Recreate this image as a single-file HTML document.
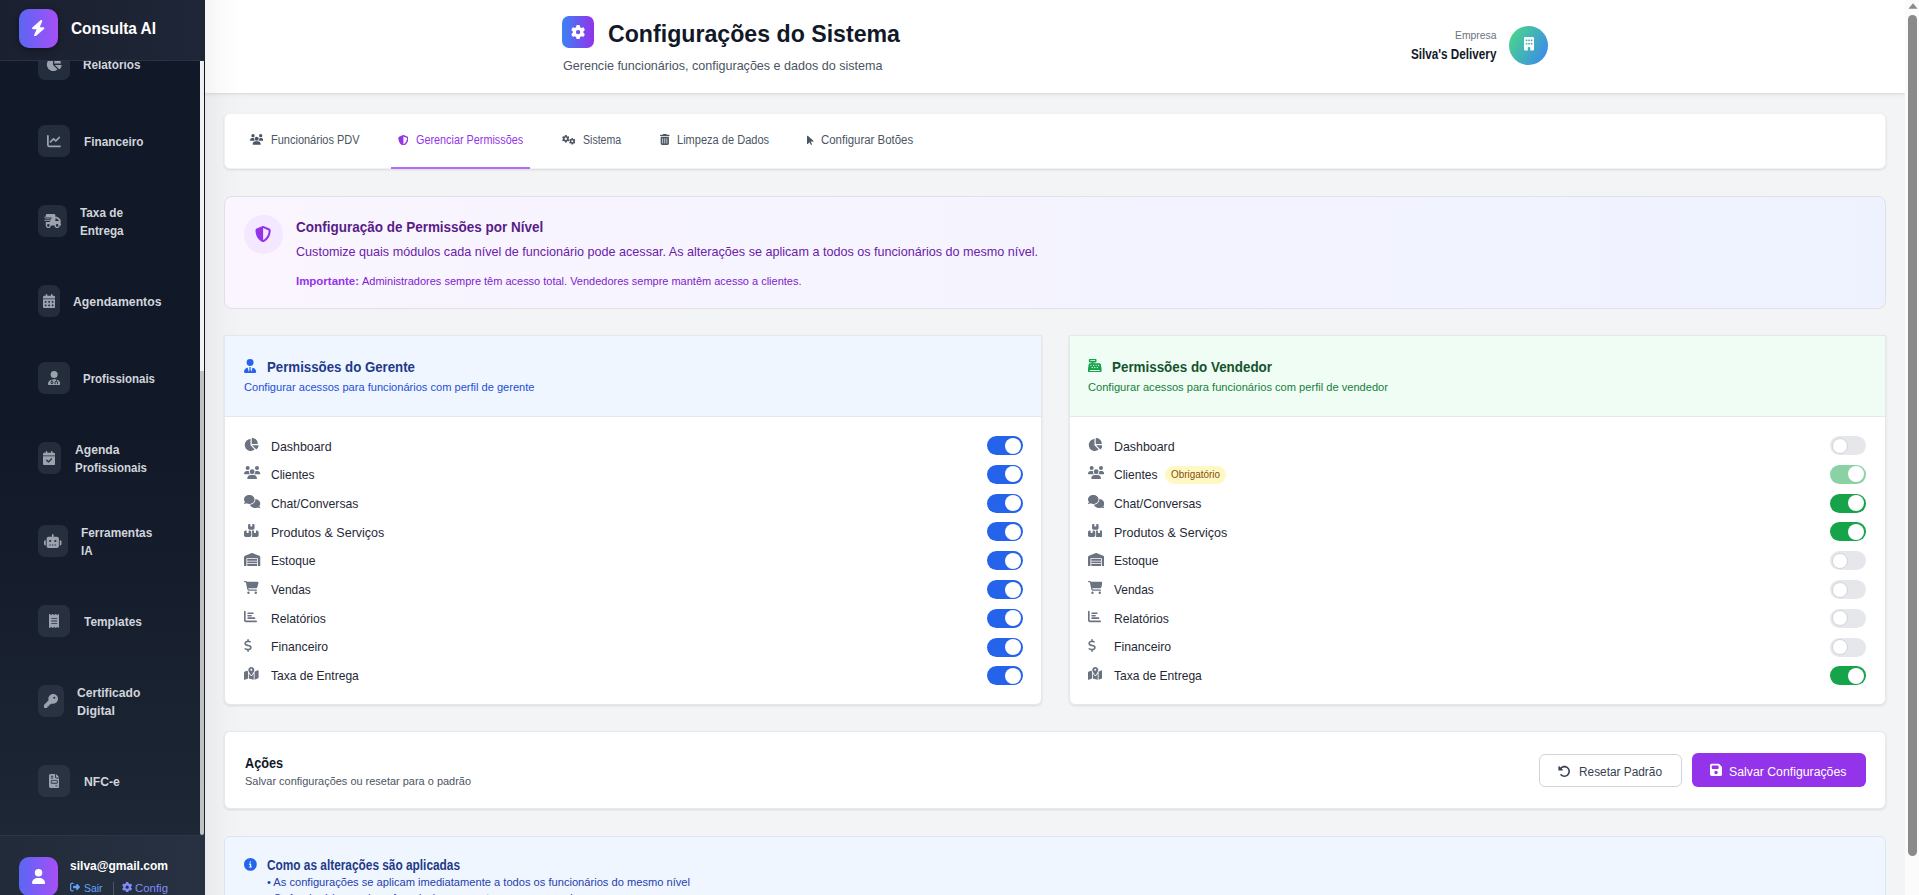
<!DOCTYPE html><html><head><meta charset="utf-8"><title>Configurações do Sistema</title><style>
html,body{margin:0;padding:0;width:1919px;height:895px;overflow:hidden;}body{position:relative;background:#f3f4f6;font-family:"Liberation Sans", sans-serif;}
div{box-sizing:border-box;}.t{position:absolute;white-space:nowrap;transform-origin:0 0;}
</style></head><body>
<div style="position:absolute;left:0px;top:0px;width:205px;height:895px;background:linear-gradient(to bottom,#111827 0%,#111827 48%,#1f2937 100%);"></div>
<div style="position:absolute;left:38px;top:48px;width:32px;height:32px;background:rgba(55,65,81,0.5);border-radius:7px;"></div>
<svg style="position:absolute;left:46.125px;top:57.0px;" width="15.75" height="14.00" viewBox="0 0 576 512"><path d="M304 240V16.6c0-9 7-16.6 16-16.6C443.7 0 544 100.3 544 224c0 9-7.6 16-16.6 16H304zM32 272C32 150.7 122.1 50.3 239 34.3c9.2-1.3 17 6.1 17 15.4V288L412.5 444.5c6.7 6.7 6.2 17.7-1.5 23.1C371.8 495.6 323.8 512 272 512C139.5 512 32 404.6 32 272zm526.4 16c9.3 0 16.6 7.8 15.4 17c-7.7 55.9-34.6 105.6-73.9 142.3c-6 5.6-15.4 5.2-21.2-.7L320 288H558.4z" fill="#9ca3af"/></svg>
<span class="t" id="t0" style="left:83.00px;top:58.12px;font-size:13.5px;line-height:13.5px;font-weight:700;color:#d1d5db;transform:scaleX(0.8723);">Relatórios</span>
<div style="position:absolute;left:38px;top:125px;width:32px;height:32px;background:rgba(55,65,81,0.5);border-radius:7px;"></div>
<svg style="position:absolute;left:47.0px;top:134.0px;" width="14.00" height="14.00" viewBox="0 0 512 512"><path d="M64 64c0-17.7-14.3-32-32-32S0 46.3 0 64V400c0 44.2 35.8 80 80 80H480c17.7 0 32-14.3 32-32s-14.3-32-32-32H80c-8.8 0-16-7.2-16-16V64zm406.6 86.6c12.5-12.5 12.5-32.8 0-45.3s-32.8-12.5-45.3 0L320 210.7l-57.4-57.4c-12.5-12.5-32.8-12.5-45.3 0l-112 112c-12.5 12.5-12.5 32.8 0 45.3s32.8 12.5 45.3 0L240 221.3l57.4 57.4c12.5 12.5 32.8 12.5 45.3 0l128-128z" fill="#9ca3af"/></svg>
<span class="t" id="t1" style="left:83.50px;top:135.12px;font-size:13.5px;line-height:13.5px;font-weight:700;color:#d1d5db;transform:scaleX(0.8716);">Financeiro</span>
<div style="position:absolute;left:38px;top:205px;width:29px;height:32px;background:rgba(55,65,81,0.5);border-radius:7px;"></div>
<svg style="position:absolute;left:43.75px;top:214.0px;" width="17.50" height="14.00" viewBox="0 0 640 512"><path d="M112 0C85.5 0 64 21.5 64 48V96H16c-8.8 0-16 7.2-16 16s7.2 16 16 16H64 272c8.8 0 16 7.2 16 16s-7.2 16-16 16H64 48c-8.8 0-16 7.2-16 16s7.2 16 16 16H64 240c8.8 0 16 7.2 16 16s-7.2 16-16 16H64 16c-8.8 0-16 7.2-16 16s7.2 16 16 16H64 208c8.8 0 16 7.2 16 16s-7.2 16-16 16H64V416c0 53 43 96 96 96s96-43 96-96H384c0 53 43 96 96 96s96-43 96-96h32c17.7 0 32-14.3 32-32s-14.3-32-32-32V288 256 237.3c0-17-6.7-33.3-18.7-45.3L512 114.7c-12-12-28.3-18.7-45.3-18.7H416V48c0-26.5-21.5-48-48-48H112zM544 237.3V256H416V160h50.7L544 237.3zM160 368a48 48 0 1 1 0 96 48 48 0 1 1 0-96zm272 48a48 48 0 1 1 96 0 48 48 0 1 1 -96 0z" fill="#9ca3af"/></svg>
<span class="t" id="t2" style="left:80.40px;top:205.72px;font-size:13.5px;line-height:13.5px;font-weight:700;color:#d1d5db;transform:scaleX(0.8725);">Taxa de</span>
<span class="t" id="t3" style="left:80.40px;top:224.33px;font-size:13.5px;line-height:13.5px;font-weight:700;color:#d1d5db;transform:scaleX(0.8674);">Entrega</span>
<div style="position:absolute;left:38px;top:285px;width:22px;height:32px;background:rgba(55,65,81,0.5);border-radius:7px;"></div>
<svg style="position:absolute;left:42.875px;top:294.0px;" width="12.25" height="14.00" viewBox="0 0 448 512"><path d="M128 0c17.7 0 32 14.3 32 32V64H288V32c0-17.7 14.3-32 32-32s32 14.3 32 32V64h48c26.5 0 48 21.5 48 48v48H0V112C0 85.5 21.5 64 48 64H96V32c0-17.7 14.3-32 32-32zM0 192H448V464c0 26.5-21.5 48-48 48H48c-26.5 0-48-21.5-48-48V192zm64 80v32c0 8.8 7.2 16 16 16h32c8.8 0 16-7.2 16-16V272c0-8.8-7.2-16-16-16H80c-8.8 0-16 7.2-16 16zm128 0v32c0 8.8 7.2 16 16 16h32c8.8 0 16-7.2 16-16V272c0-8.8-7.2-16-16-16H208c-8.8 0-16 7.2-16 16zm144-16c-8.8 0-16 7.2-16 16v32c0 8.8 7.2 16 16 16h32c8.8 0 16-7.2 16-16V272c0-8.8-7.2-16-16-16H336zM64 400v32c0 8.8 7.2 16 16 16h32c8.8 0 16-7.2 16-16V400c0-8.8-7.2-16-16-16H80c-8.8 0-16 7.2-16 16zm144-16c-8.8 0-16 7.2-16 16v32c0 8.8 7.2 16 16 16h32c8.8 0 16-7.2 16-16V400c0-8.8-7.2-16-16-16H208zm112 16v32c0 8.8 7.2 16 16 16h32c8.8 0 16-7.2 16-16V400c0-8.8-7.2-16-16-16H336c-8.8 0-16 7.2-16 16z" fill="#9ca3af"/></svg>
<span class="t" id="t4" style="left:73.30px;top:295.12px;font-size:13.5px;line-height:13.5px;font-weight:700;color:#d1d5db;transform:scaleX(0.9075);">Agendamentos</span>
<div style="position:absolute;left:38px;top:362px;width:32px;height:32px;background:rgba(55,65,81,0.5);border-radius:7px;"></div>
<svg style="position:absolute;left:47.875px;top:371.0px;" width="12.25" height="14.00" viewBox="0 0 448 512"><path d="M224 256A128 128 0 1 0 224 0a128 128 0 1 0 0 256zm-96 55.2C54 332.9 0 401.3 0 482.3C0 498.7 13.3 512 29.7 512H418.3c16.4 0 29.7-13.3 29.7-29.7c0-81-54-149.4-128-171.1V362c27.6 7.1 48 32.2 48 62v40c0 8.8-7.2 16-16 16H336c-8.8 0-16-7.2-16-16s7.2-16 16-16V424c0-17.7-14.3-32-32-32s-32 14.3-32 32v24c8.8 0 16 7.2 16 16s-7.2 16-16 16H256c-8.8 0-16-7.2-16-16V424c0-29.8 20.4-54.9 48-62V304.9c-6-.6-12.1-.9-18.3-.9H178.3c-6.2 0-12.3 .3-18.3 .9v65.4c23.1 6.9 40 28.3 40 53.7c0 30.9-25.1 56-56 56s-56-25.1-56-56c0-25.4 16.9-46.8 40-53.7V311.2zM144 448a24 24 0 1 0 0-48 24 24 0 1 0 0 48z" fill="#9ca3af"/></svg>
<span class="t" id="t5" style="left:83.40px;top:372.12px;font-size:13.5px;line-height:13.5px;font-weight:700;color:#d1d5db;transform:scaleX(0.8492);">Profissionais</span>
<div style="position:absolute;left:38px;top:442px;width:22.5px;height:32px;background:rgba(55,65,81,0.5);border-radius:7px;"></div>
<svg style="position:absolute;left:43.125px;top:451.0px;" width="12.25" height="14.00" viewBox="0 0 448 512"><path d="M128 0c17.7 0 32 14.3 32 32V64H288V32c0-17.7 14.3-32 32-32s32 14.3 32 32V64h48c26.5 0 48 21.5 48 48v48H0V112C0 85.5 21.5 64 48 64H96V32c0-17.7 14.3-32 32-32zM0 192H448V464c0 26.5-21.5 48-48 48H48c-26.5 0-48-21.5-48-48V192zM329 305c9.4-9.4 9.4-24.6 0-33.9s-24.6-9.4-33.9 0l-95 95-47-47c-9.4-9.4-24.6-9.4-33.9 0s-9.4 24.6 0 33.9l64 64c9.4 9.4 24.6 9.4 33.9 0L329 305z" fill="#9ca3af"/></svg>
<span class="t" id="t6" style="left:74.60px;top:442.72px;font-size:13.5px;line-height:13.5px;font-weight:700;color:#d1d5db;transform:scaleX(0.8987);">Agenda</span>
<span class="t" id="t7" style="left:74.60px;top:461.32px;font-size:13.5px;line-height:13.5px;font-weight:700;color:#d1d5db;transform:scaleX(0.8492);">Profissionais</span>
<div style="position:absolute;left:38px;top:525px;width:30px;height:32px;background:rgba(55,65,81,0.5);border-radius:7px;"></div>
<svg style="position:absolute;left:44.25px;top:534.0px;" width="17.50" height="14.00" viewBox="0 0 640 512"><path d="M320 0c17.7 0 32 14.3 32 32V96H472c39.8 0 72 32.2 72 72V440c0 39.8-32.2 72-72 72H168c-39.8 0-72-32.2-72-72V168c0-39.8 32.2-72 72-72H288V32c0-17.7 14.3-32 32-32zM208 384c-8.8 0-16 7.2-16 16s7.2 16 16 16h32c8.8 0 16-7.2 16-16s-7.2-16-16-16H208zm96 0c-8.8 0-16 7.2-16 16s7.2 16 16 16h32c8.8 0 16-7.2 16-16s-7.2-16-16-16H304zm96 0c-8.8 0-16 7.2-16 16s7.2 16 16 16h32c8.8 0 16-7.2 16-16s-7.2-16-16-16H400zM264 256a40 40 0 1 0 -80 0 40 40 0 1 0 80 0zm152 40a40 40 0 1 0 0-80 40 40 0 1 0 0 80zM48 224H64V416H48c-26.5 0-48-21.5-48-48V272c0-26.5 21.5-48 48-48zm544 0c26.5 0 48 21.5 48 48v96c0 26.5-21.5 48-48 48H576V224h16z" fill="#9ca3af"/></svg>
<span class="t" id="t8" style="left:81.30px;top:525.73px;font-size:13.5px;line-height:13.5px;font-weight:700;color:#d1d5db;transform:scaleX(0.8797);">Ferramentas</span>
<span class="t" id="t9" style="left:81.30px;top:544.32px;font-size:13.5px;line-height:13.5px;font-weight:700;color:#d1d5db;transform:scaleX(0.8593);">IA</span>
<div style="position:absolute;left:38px;top:605px;width:32px;height:32px;background:rgba(55,65,81,0.5);border-radius:7px;"></div>
<svg style="position:absolute;left:48.75px;top:614.0px;" width="10.50" height="14.00" viewBox="0 0 384 512"><path d="M14 2.2C22.5-1.7 32.5-.3 39.6 5.8L80 40.4 120.4 5.8c9-7.7 22.3-7.7 31.2 0L192 40.4 232.4 5.8c9-7.7 22.3-7.7 31.2 0L304 40.4 344.4 5.8c7.1-6.1 17.1-7.5 25.6-3.6s14 12.4 14 21.8V488c0 9.4-5.5 17.9-14 21.8s-18.5 2.5-25.6-3.6L304 471.6l-40.4 34.6c-9 7.7-22.3 7.7-31.2 0L192 471.6l-40.4 34.6c-9 7.7-22.3 7.7-31.2 0L80 471.6 39.6 506.2c-7.1 6.1-17.1 7.5-25.6 3.6S0 497.4 0 488V24C0 14.6 5.5 6.1 14 2.2zM96 144c-8.8 0-16 7.2-16 16s7.2 16 16 16H288c8.8 0 16-7.2 16-16s-7.2-16-16-16H96zM80 352c0 8.8 7.2 16 16 16H288c8.8 0 16-7.2 16-16s-7.2-16-16-16H96c-8.8 0-16 7.2-16 16zM96 240c-8.8 0-16 7.2-16 16s7.2 16 16 16H288c8.8 0 16-7.2 16-16s-7.2-16-16-16H96z" fill="#9ca3af"/></svg>
<span class="t" id="t10" style="left:84.00px;top:615.12px;font-size:13.5px;line-height:13.5px;font-weight:700;color:#d1d5db;transform:scaleX(0.8802);">Templates</span>
<div style="position:absolute;left:38px;top:685px;width:26px;height:32px;background:rgba(55,65,81,0.5);border-radius:7px;"></div>
<svg style="position:absolute;left:44.0px;top:694.0px;" width="14.00" height="14.00" viewBox="0 0 512 512"><path d="M336 352c97.2 0 176-78.8 176-176S433.2 0 336 0S160 78.8 160 176c0 18.7 2.9 36.8 8.3 53.7L7 391c-4.5 4.5-7 10.6-7 17v80c0 13.3 10.7 24 24 24h80c13.3 0 24-10.7 24-24V448h40c13.3 0 24-10.7 24-24V384h40c6.4 0 12.5-2.5 17-7l33.3-33.3c16.9 5.4 35 8.3 53.7 8.3zM376 96a40 40 0 1 1 0 80 40 40 0 1 1 0-80z" fill="#9ca3af"/></svg>
<span class="t" id="t11" style="left:76.80px;top:685.73px;font-size:13.5px;line-height:13.5px;font-weight:700;color:#d1d5db;transform:scaleX(0.8977);">Certificado</span>
<span class="t" id="t12" style="left:76.80px;top:704.32px;font-size:13.5px;line-height:13.5px;font-weight:700;color:#d1d5db;transform:scaleX(0.9184);">Digital</span>
<div style="position:absolute;left:38px;top:765px;width:32px;height:32px;background:rgba(55,65,81,0.5);border-radius:7px;"></div>
<svg style="position:absolute;left:48.75px;top:774.0px;" width="10.50" height="14.00" viewBox="0 0 384 512"><path d="M64 0C28.7 0 0 28.7 0 64V448c0 35.3 28.7 64 64 64H320c35.3 0 64-28.7 64-64V160H256c-17.7 0-32-14.3-32-32V0H64zM256 0V128H384L256 0zM80 64h64c8.8 0 16 7.2 16 16s-7.2 16-16 16H80c-8.8 0-16-7.2-16-16s7.2-16 16-16zm0 64h64c8.8 0 16 7.2 16 16s-7.2 16-16 16H80c-8.8 0-16-7.2-16-16s7.2-16 16-16zm16 96H288c17.7 0 32 14.3 32 32v64c0 17.7-14.3 32-32 32H96c-17.7 0-32-14.3-32-32V256c0-17.7 14.3-32 32-32zm0 32v64H288V256H96zM240 416h64c8.8 0 16 7.2 16 16s-7.2 16-16 16H240c-8.8 0-16-7.2-16-16s7.2-16 16-16z" fill="#9ca3af"/></svg>
<span class="t" id="t13" style="left:83.50px;top:775.12px;font-size:13.5px;line-height:13.5px;font-weight:700;color:#d1d5db;transform:scaleX(0.9006);">NFC-e</span>
<div style="position:absolute;left:0px;top:0px;width:205px;height:61px;background:linear-gradient(to right,#1a202f,#1f2637);border-bottom:1px solid #293142;"></div>
<div style="position:absolute;left:19px;top:9px;width:39px;height:39px;border-radius:10px;background:linear-gradient(to right,#5b66f4,#a64ff6);box-shadow:0 2px 6px rgba(0,0,0,0.35);"></div>
<svg style="position:absolute;left:31px;top:19.8px;" width="14.35" height="16.40" viewBox="0 0 448 512"><path d="M349.4 44.6c5.9-13.7 1.5-29.7-10.6-38.5s-28.6-8-39.9 1.8l-256 224c-10 8.8-13.6 22.9-8.9 35.3S50.7 288 64 288H175.5L98.6 467.4c-5.9 13.7-1.5 29.7 10.6 38.5s28.6 8 39.9-1.8l256-224c10-8.8 13.6-22.9 8.9-35.3s-16.6-20.7-30-20.7H272.5L349.4 44.6z" fill="#fff"/></svg>
<span class="t" id="t14" style="left:70.70px;top:20.60px;font-size:16px;line-height:16px;font-weight:700;color:#ffffff;transform:scaleX(0.9627);">Consulta AI</span>
<div style="position:absolute;left:200px;top:61px;width:4px;height:310px;background:#f1f1f1;"></div>
<div style="position:absolute;left:200px;top:371px;width:4px;height:464px;background:#c1c1c1;border-radius:0 0 2px 2px;"></div>
<div style="position:absolute;left:0px;top:835px;width:205px;height:60px;background:linear-gradient(to right,#222b3a,#283141);border-top:1px solid #2d3546;"></div>
<div style="position:absolute;left:19px;top:857px;width:39px;height:39px;border-radius:10px;background:linear-gradient(to right,#5b66f4,#a64ff6);"></div>
<svg style="position:absolute;left:31.7px;top:868.5px;" width="13.12" height="15.00" viewBox="0 0 448 512"><path d="M224 256A128 128 0 1 0 224 0a128 128 0 1 0 0 256zm-45.7 48C79.8 304 0 383.8 0 482.3C0 498.7 13.3 512 29.7 512H418.3c16.4 0 29.7-13.3 29.7-29.7C448 383.8 368.2 304 269.7 304H178.3z" fill="#fff"/></svg>
<span class="t" id="t15" style="left:70.20px;top:858.52px;font-size:13.5px;line-height:13.5px;font-weight:700;color:#ffffff;transform:scaleX(0.8912);">silva@gmail.com</span>
<svg style="position:absolute;left:70.2px;top:882.2px;" width="10.00" height="10.00" viewBox="0 0 512 512"><path d="M377.9 105.9L500.7 228.7c7.2 7.2 11.3 17.1 11.3 27.3s-4.1 20.1-11.3 27.3L377.9 406.1c-6.4 6.4-15 9.9-24 9.9c-18.7 0-33.9-15.2-33.9-33.9l0-62.1-128 0c-17.7 0-32-14.3-32-32l0-64c0-17.7 14.3-32 32-32l128 0 0-62.1c0-18.7 15.2-33.900 33.9-33.9c9 0 17.6 3.6 24 9.9zM160 96L96 96c-17.7 0-32 14.3-32 32l0 256c0 17.7 14.3 32 32 32l64 0c17.7 0 32 14.3 32 32s-14.3 32-32 32l-64 0c-53 0-96-43-96-96L0 128C0 75 43 32 96 32l64 0c17.7 0 32 14.3 32 32s-14.3 32-32 32z" fill="#60a5fa"/></svg>
<span class="t" id="t16" style="left:83.50px;top:882.73px;font-size:11.5px;line-height:11.5px;font-weight:400;color:#60a5fa;transform:scaleX(0.9045);">Sair</span>
<div style="position:absolute;left:113px;top:882px;width:1px;height:13px;background:#4b5563;"></div>
<svg style="position:absolute;left:122.2px;top:881.9px;" width="10.30" height="10.30" viewBox="0 0 512 512"><path d="M495.9 166.6c3.2 8.7 .5 18.4-6.4 24.6l-43.3 39.4c1.1 8.3 1.7 16.8 1.7 25.4s-.6 17.1-1.7 25.4l43.3 39.4c6.9 6.2 9.6 15.9 6.4 24.6c-4.4 11.9-9.7 23.3-15.8 34.3l-4.7 8.1c-6.6 11-14 21.4-22.1 31.2c-5.9 7.200-15.7 9.6-24.5 6.8l-55.7-17.7c-13.4 10.3-28.2 18.9-44 25.4l-12.5 57.1c-2 9.1-9 16.3-18.2 17.8c-13.8 2.3-28 3.5-42.5 3.5s-28.7-1.2-42.5-3.5c-9.2-1.5-16.2-8.7-18.2-17.8l-12.5-57.1c-15.8-6.5-30.6-15.1-44-25.4L83.1 425.9c-8.8 2.8-18.6 .3-24.5-6.8c-8.1-9.8-15.5-20.2-22.1-31.2l-4.7-8.1c-6.1-11-11.4-22.4-15.8-34.3c-3.2-8.7-.5-18.4 6.4-24.6l43.3-39.4C64.6 273.1 64 264.6 64 256s.6-17.1 1.7-25.4L22.4 191.2c-6.9-6.2-9.6-15.9-6.4-24.6c4.4-11.9 9.7-23.3 15.8-34.3l4.7-8.1c6.6-11 14-21.4 22.1-31.2c5.9-7.2 15.7-9.6 24.5-6.8l55.7 17.7c13.4-10.3 28.2-18.9 44-25.4l12.5-57.1c2-9.1 9-16.3 18.2-17.8C227.3 1.2 241.5 0 256 0s28.7 1.2 42.5 3.5c9.2 1.5 16.2 8.7 18.2 17.8l12.5 57.1c15.8 6.5 30.6 15.1 44 25.4l55.7-17.7c8.8-2.8 18.6-.3 24.5 6.8c8.1 9.8 15.5 20.2 22.1 31.2l4.7 8.1c6.1 11 11.4 22.4 15.8 34.3zM256 336a80 80 0 1 0 0-160 80 80 0 1 0 0 160z" fill="#818cf8"/></svg>
<span class="t" id="t17" style="left:135.00px;top:882.73px;font-size:11.5px;line-height:11.5px;font-weight:400;color:#818cf8;transform:scaleX(0.9925);">Config</span>
<div style="position:absolute;left:205px;top:0px;width:1699.5px;height:93px;background:#fff;box-shadow:0 1px 2px rgba(0,0,0,0.07),0 2px 6px rgba(0,0,0,0.05);"></div>
<div style="position:absolute;left:562px;top:16px;width:32px;height:32px;border-radius:7px;background:linear-gradient(to right,#3b82f6,#9333ea);"></div>
<svg style="position:absolute;left:571px;top:24.8px;" width="14.20" height="14.20" viewBox="0 0 512 512"><path d="M495.9 166.6c3.2 8.7 .5 18.4-6.4 24.6l-43.3 39.4c1.1 8.3 1.7 16.8 1.7 25.4s-.6 17.1-1.7 25.4l43.3 39.4c6.9 6.2 9.6 15.9 6.4 24.6c-4.4 11.9-9.7 23.3-15.8 34.3l-4.7 8.1c-6.6 11-14 21.4-22.1 31.2c-5.9 7.200-15.7 9.6-24.5 6.8l-55.7-17.7c-13.4 10.3-28.2 18.9-44 25.4l-12.5 57.1c-2 9.1-9 16.3-18.2 17.8c-13.8 2.3-28 3.5-42.5 3.5s-28.7-1.2-42.5-3.5c-9.2-1.5-16.2-8.7-18.2-17.8l-12.5-57.1c-15.8-6.5-30.6-15.1-44-25.4L83.1 425.9c-8.8 2.8-18.6 .3-24.5-6.8c-8.1-9.8-15.5-20.2-22.1-31.2l-4.7-8.1c-6.1-11-11.4-22.4-15.8-34.3c-3.2-8.7-.5-18.4 6.4-24.6l43.3-39.4C64.6 273.1 64 264.6 64 256s.6-17.1 1.7-25.4L22.4 191.2c-6.9-6.2-9.6-15.9-6.4-24.6c4.4-11.9 9.7-23.3 15.8-34.3l4.7-8.1c6.6-11 14-21.4 22.1-31.2c5.9-7.2 15.7-9.6 24.5-6.8l55.7 17.7c13.4-10.3 28.2-18.9 44-25.4l12.5-57.1c2-9.1 9-16.3 18.2-17.8C227.3 1.2 241.5 0 256 0s28.7 1.2 42.5 3.5c9.2 1.5 16.2 8.7 18.2 17.8l12.5 57.1c15.8 6.5 30.6 15.1 44 25.4l55.7-17.7c8.8-2.8 18.6-.3 24.5 6.8c8.1 9.8 15.5 20.2 22.1 31.2l4.7 8.1c6.1 11 11.4 22.4 15.8 34.3zM256 336a80 80 0 1 0 0-160 80 80 0 1 0 0 160z" fill="#fff"/></svg>
<span class="t" id="t18" style="left:607.80px;top:21.50px;font-size:24px;line-height:24px;font-weight:700;color:#111827;transform:scaleX(0.9645);">Configurações do Sistema</span>
<span class="t" id="t19" style="left:562.60px;top:58.95px;font-size:13px;line-height:13px;font-weight:400;color:#4b5563;transform:scaleX(0.9650);">Gerencie funcionários, configurações e dados do sistema</span>
<span class="t" id="t20" style="left:1454.50px;top:30.05px;font-size:11px;line-height:11px;font-weight:400;color:#6b7280;transform:scaleX(0.9425);">Empresa</span>
<span class="t" id="t21" style="left:1410.80px;top:46.50px;font-size:14px;line-height:14px;font-weight:700;color:#111827;transform:scaleX(0.8357);">Silva's Delivery</span>
<div style="position:absolute;left:1509px;top:26px;width:39px;height:39px;border-radius:50%;background:linear-gradient(120deg,#4ade80,#3b82f6);"></div>
<svg style="position:absolute;left:1523.8px;top:37.2px;" width="10.12" height="13.50" viewBox="0 0 384 512"><path d="M48 0C21.5 0 0 21.5 0 48V464c0 26.5 21.5 48 48 48h96V432c0-26.5 21.5-48 48-48s48 21.5 48 48v80h96c26.5 0 48-21.5 48-48V48c0-26.5-21.5-48-48-48H48zM64 240c0-8.8 7.2-16 16-16h32c8.8 0 16 7.2 16 16v32c0 8.8-7.2 16-16 16H80c-8.8 0-16-7.2-16-16V240zm112-16h32c8.8 0 16 7.2 16 16v32c0 8.8-7.2 16-16 16H176c-8.8 0-16-7.2-16-16V240c0-8.8 7.2-16 16-16zm80 16c0-8.8 7.2-16 16-16h32c8.8 0 16 7.2 16 16v32c0 8.8-7.2 16-16 16H272c-8.8 0-16-7.2-16-16V240zM80 96h32c8.8 0 16 7.2 16 16v32c0 8.8-7.2 16-16 16H80c-8.8 0-16-7.2-16-16V112c0-8.8 7.2-16 16-16zm80 16c0-8.8 7.2-16 16-16h32c8.8 0 16 7.2 16 16v32c0 8.8-7.2 16-16 16H176c-8.8 0-16-7.2-16-16V112zM272 96h32c8.8 0 16 7.2 16 16v32c0 8.8-7.2 16-16 16H272c-8.8 0-16-7.2-16-16V112c0-8.8 7.2-16 16-16z" fill="#fff"/></svg>
<div style="position:absolute;left:205px;top:0px;width:40px;height:895px;background:linear-gradient(to right,rgba(0,0,0,0.045),rgba(0,0,0,0.01) 50%,rgba(0,0,0,0));"></div>
<div style="position:absolute;left:1904.5px;top:0px;width:14.5px;height:895px;background:#fbfbfb;"></div>
<svg style="position:absolute;left:1907.5px;top:2.5px;" width="10" height="6" viewBox="0 0 10 6"><path d="M5 0.3 L9.6 5.7 H0.4 Z" fill="#8a8a8a"/></svg>
<div style="position:absolute;left:1908px;top:15px;width:9px;height:841px;background:#8a8a8a;border-radius:4.5px;"></div>
<div style="position:absolute;left:224px;top:112.5px;width:1662px;height:56.5px;background:#fff;border:1px solid #f0f1f3;border-radius:6px;box-shadow:0 1px 3px rgba(0,0,0,0.08),0 1px 2px rgba(0,0,0,0.04);"></div>
<svg style="position:absolute;left:249.7px;top:134.4px;" width="13.38" height="10.70" viewBox="0 0 640 512"><path d="M144 0a80 80 0 1 1 0 160A80 80 0 1 1 144 0zM512 0a80 80 0 1 1 0 160A80 80 0 1 1 512 0zM0 298.7C0 239.8 47.8 192 106.7 192h42.7c15.9 0 31 3.5 44.6 9.7c-1.3 7.2-1.9 14.7-1.9 22.3c0 38.2 16.8 72.5 43.3 96c-.2 0-.4 0-.7 0H21.3C9.6 320 0 310.4 0 298.7zM405.3 320c-.2 0-.4 0-.7 0c26.6-23.5 43.3-57.8 43.3-96c0-7.6-.7-15-1.900-22.3c13.6-6.3 28.7-9.7 44.6-9.7h42.7C592.2 192 640 239.8 640 298.7c0 11.8-9.6 21.3-21.3 21.3H405.3zM224 224a96 96 0 1 1 192 0 96 96 0 1 1 -192 0zM128 485.3C128 411.7 187.7 352 261.3 352H378.7C452.3 352 512 411.7 512 485.3c0 14.7-11.9 26.7-26.7 26.7H154.7c-14.7 0-26.7-11.9-26.7-26.7z" fill="#4b5563"/></svg>
<span class="t" id="t22" style="left:270.50px;top:134.00px;font-size:12px;line-height:12px;font-weight:400;color:#4b5563;transform:scaleX(0.9161);">Funcionários PDV</span>
<svg style="position:absolute;left:397.6px;top:134.6px;" width="10.80" height="10.80" viewBox="0 0 512 512"><path d="M256 0c4.6 0 9.2 1 13.4 2.9L457.7 82.8c22 9.3 38.4 31 38.3 57.2c-.5 99.2-41.3 280.7-213.6 363.2c-16.7 8-36.1 8-52.8 0C57.3 420.7 16.5 239.2 16 140c-.1-26.2 16.3-47.9 38.3-57.2L242.7 2.9C246.8 1 251.4 0 256 0zm0 66.8V444.8C394 378 431.1 230.1 432 141.4L256 66.8l0 0z" fill="#9333ea"/></svg>
<span class="t" id="t23" style="left:415.90px;top:134.00px;font-size:12px;line-height:12px;font-weight:400;color:#9333ea;transform:scaleX(0.9021);">Gerenciar Permissões</span>
<div style="position:absolute;left:391px;top:167.1px;width:139px;height:1.8px;background:#a855f7;opacity:0.85;"></div>
<svg style="position:absolute;left:561.5px;top:135.3px;" width="7.60" height="7.60" viewBox="0 0 512 512"><path d="M495.9 166.6c3.2 8.7 .5 18.4-6.4 24.6l-43.3 39.4c1.1 8.3 1.7 16.8 1.7 25.4s-.6 17.1-1.7 25.4l43.3 39.4c6.9 6.2 9.6 15.9 6.4 24.6c-4.4 11.9-9.7 23.3-15.8 34.3l-4.7 8.1c-6.6 11-14 21.4-22.1 31.2c-5.9 7.200-15.7 9.6-24.5 6.8l-55.7-17.7c-13.4 10.3-28.2 18.9-44 25.4l-12.5 57.1c-2 9.1-9 16.3-18.2 17.8c-13.8 2.3-28 3.5-42.5 3.5s-28.7-1.2-42.5-3.5c-9.2-1.5-16.2-8.7-18.2-17.8l-12.5-57.1c-15.8-6.5-30.6-15.1-44-25.4L83.1 425.9c-8.8 2.8-18.6 .3-24.5-6.8c-8.1-9.8-15.5-20.2-22.1-31.2l-4.7-8.1c-6.1-11-11.4-22.4-15.8-34.3c-3.2-8.7-.5-18.4 6.4-24.6l43.3-39.4C64.6 273.1 64 264.6 64 256s.6-17.1 1.7-25.4L22.4 191.2c-6.9-6.2-9.6-15.9-6.4-24.6c4.4-11.9 9.7-23.3 15.8-34.3l4.7-8.1c6.6-11 14-21.4 22.1-31.2c5.9-7.2 15.7-9.6 24.5-6.8l55.7 17.7c13.4-10.3 28.2-18.9 44-25.4l12.5-57.1c2-9.1 9-16.3 18.2-17.8C227.3 1.2 241.5 0 256 0s28.7 1.2 42.5 3.5c9.2 1.5 16.2 8.7 18.2 17.8l12.5 57.1c15.8 6.5 30.6 15.1 44 25.4l55.7-17.7c8.8-2.8 18.6-.3 24.5 6.8c8.1 9.8 15.5 20.2 22.1 31.2l4.7 8.1c6.1 11 11.4 22.4 15.8 34.3zM256 336a80 80 0 1 0 0-160 80 80 0 1 0 0 160z" fill="#4b5563"/></svg>
<svg style="position:absolute;left:568.6999999999999px;top:138.3px;" width="6.60" height="6.60" viewBox="0 0 512 512"><path d="M495.9 166.6c3.2 8.7 .5 18.4-6.4 24.6l-43.3 39.4c1.1 8.3 1.7 16.8 1.7 25.4s-.6 17.1-1.7 25.4l43.3 39.4c6.9 6.2 9.6 15.9 6.4 24.6c-4.4 11.9-9.7 23.3-15.8 34.3l-4.7 8.1c-6.6 11-14 21.4-22.1 31.2c-5.9 7.200-15.7 9.6-24.5 6.8l-55.7-17.7c-13.4 10.3-28.2 18.9-44 25.4l-12.5 57.1c-2 9.1-9 16.3-18.2 17.8c-13.8 2.3-28 3.5-42.5 3.5s-28.7-1.2-42.5-3.5c-9.2-1.5-16.2-8.7-18.2-17.8l-12.5-57.1c-15.8-6.5-30.6-15.1-44-25.4L83.1 425.9c-8.8 2.8-18.6 .3-24.5-6.8c-8.1-9.8-15.5-20.2-22.1-31.2l-4.7-8.1c-6.1-11-11.4-22.4-15.8-34.3c-3.2-8.7-.5-18.4 6.4-24.6l43.3-39.4C64.6 273.1 64 264.6 64 256s.6-17.1 1.7-25.4L22.4 191.2c-6.9-6.2-9.6-15.9-6.4-24.6c4.4-11.9 9.7-23.3 15.8-34.3l4.7-8.1c6.6-11 14-21.4 22.1-31.2c5.9-7.2 15.7-9.6 24.5-6.8l55.7 17.7c13.4-10.3 28.2-18.9 44-25.4l12.5-57.1c2-9.1 9-16.3 18.2-17.8C227.3 1.2 241.5 0 256 0s28.7 1.2 42.5 3.5c9.2 1.5 16.2 8.7 18.2 17.8l12.5 57.1c15.8 6.5 30.6 15.1 44 25.4l55.7-17.7c8.8-2.8 18.6-.3 24.5 6.8c8.1 9.8 15.5 20.2 22.1 31.2l4.7 8.1c6.1 11 11.4 22.4 15.8 34.3zM256 336a80 80 0 1 0 0-160 80 80 0 1 0 0 160z" fill="#4b5563"/></svg>
<span class="t" id="t24" style="left:582.70px;top:134.00px;font-size:12px;line-height:12px;font-weight:400;color:#4b5563;transform:scaleX(0.8810);">Sistema</span>
<svg style="position:absolute;left:659.9px;top:134.3px;" width="9.62" height="11.00" viewBox="0 0 448 512"><path d="M135.2 17.7C140.6 6.8 151.7 0 163.8 0H284.2c12.1 0 23.2 6.8 28.6 17.7L320 32h96c17.7 0 32 14.3 32 32s-14.3 32-32 32H32C14.3 96 0 81.7 0 64S14.3 32 32 32h96l7.2-14.3zM32 128H416V448c0 35.3-28.700 64-64 64H96c-35.3 0-64-28.7-64-64V128zm96 64c-8.8 0-16 7.2-16 16V432c0 8.8 7.2 16 16 16s16-7.2 16-16V208c0-8.8-7.2-16-16-16zm96 0c-8.8 0-16 7.2-16 16V432c0 8.8 7.2 16 16 16s16-7.2 16-16V208c0-8.8-7.2-16-16-16zm96 0c-8.8 0-16 7.2-16 16V432c0 8.8 7.2 16 16 16s16-7.2 16-16V208c0-8.8-7.2-16-16-16z" fill="#4b5563"/></svg>
<span class="t" id="t25" style="left:676.70px;top:134.00px;font-size:12px;line-height:12px;font-weight:400;color:#4b5563;transform:scaleX(0.9204);">Limpeza de Dados</span>
<svg style="position:absolute;left:807.2px;top:135.0px;" width="6.62" height="10.60" viewBox="0 0 320 512"><path d="M0 55.2V426c0 12.2 9.9 22 22 22c6.3 0 12.4-2.7 16.6-7.5L121.2 346l58.1 116.3c7.9 15.8 27.1 22.2 42.9 14.3s22.2-27.1 14.3-42.900L179.8 320H297.9c12.2 0 22.1-9.9 22.1-22.1c0-6.3-2.7-12.3-7.4-16.5L38.6 37.9C34.3 34.1 28.9 32 23.2 32C10.4 32 0 42.4 0 55.2z" fill="#4b5563"/></svg>
<span class="t" id="t26" style="left:821.30px;top:134.00px;font-size:12px;line-height:12px;font-weight:400;color:#4b5563;transform:scaleX(0.9521);">Configurar Botões</span>
<div style="position:absolute;left:224px;top:195.5px;width:1662px;height:113px;border:1px solid #e3dfea;border-radius:8px;background:linear-gradient(to right,#faf5ff,#eef2ff);"></div>
<div style="position:absolute;left:243.8px;top:214.8px;width:39.2px;height:39.2px;border-radius:50%;background:#f3e8ff;"></div>
<svg style="position:absolute;left:255.2px;top:225.7px;" width="16.20" height="16.20" viewBox="0 0 512 512"><path d="M256 0c4.6 0 9.2 1 13.4 2.9L457.7 82.8c22 9.3 38.4 31 38.3 57.2c-.5 99.2-41.3 280.7-213.6 363.2c-16.7 8-36.1 8-52.8 0C57.3 420.7 16.5 239.2 16 140c-.1-26.2 16.3-47.9 38.3-57.2L242.7 2.9C246.8 1 251.4 0 256 0zm0 66.8V444.8C394 378 431.1 230.1 432 141.4L256 66.8l0 0z" fill="#9333ea"/></svg>
<span class="t" id="t27" style="left:295.90px;top:219.90px;font-size:14px;line-height:14px;font-weight:700;color:#581c87;transform:scaleX(0.9632);">Configuração de Permissões por Nível</span>
<span class="t" id="t28" style="left:295.90px;top:244.85px;font-size:13px;line-height:13px;font-weight:400;color:#6b21a8;transform:scaleX(0.9696);">Customize quais módulos cada nível de funcionário pode acessar. As alterações se aplicam a todos os funcionários do mesmo nível.</span>
<span class="t" id="t29" style="left:295.90px;top:276.00px;font-size:11.3px;line-height:11.3px;font-weight:700;color:#9333ea;transform:scaleX(1.0138);">Importante:</span>
<span class="t" id="t30" style="left:361.50px;top:276.00px;font-size:11.3px;line-height:11.3px;font-weight:400;color:#7e22ce;transform:scaleX(0.9721);">Administradores sempre têm acesso total. Vendedores sempre mantêm acesso a clientes.</span>
<div style="position:absolute;left:224px;top:335px;width:817.5px;height:369.5px;background:#fff;border:1px solid #e5e7eb;border-radius:0 0 6px 6px;box-shadow:0 1px 3px rgba(0,0,0,0.07),0 1px 2px rgba(0,0,0,0.04);"></div>
<div style="position:absolute;left:225px;top:336px;width:815.5px;height:80.5px;background:#eff6ff;border-bottom:1px solid #e5e7eb;"></div>
<svg style="position:absolute;left:244.4px;top:359.1px;" width="12.16" height="13.90" viewBox="0 0 448 512"><path d="M96 128a128 128 0 1 0 256 0A128 128 0 1 0 96 128zm94.5 200.2l18.6 31L175.8 483.1l-36-146.9c-2-8.1-9.8-13.4-17.9-11.3C51.9 342.4 0 405.8 0 481.3c0 17 13.8 30.7 30.7 30.7H162.5c0 0 0 0 .1 0H168 280h5.5c0 0 0 0 .1 0H417.3c17 0 30.7-13.8 30.7-30.7c0-75.5-51.9-138.9-121.9-156.4c-8.1-2-15.9 3.3-17.9 11.3l-36 146.9L238.9 359.2l18.6-31c6.4-10.7-1.3-24.2-13.7-24.2H224 204.3c-12.4 0-20.1 13.6-13.7 24.2z" fill="#2563eb"/></svg>
<span class="t" id="t31" style="left:267.00px;top:359.88px;font-size:14.5px;line-height:14.5px;font-weight:700;color:#1e3a8a;transform:scaleX(0.9136);">Permissões do Gerente</span>
<span class="t" id="t32" style="left:244.40px;top:382.23px;font-size:11.5px;line-height:11.5px;font-weight:400;color:#1d4ed8;transform:scaleX(0.9628);">Configurar acessos para funcionários com perfil de gerente</span>
<span class="t" id="t33" style="left:270.60px;top:439.75px;font-size:13px;line-height:13px;font-weight:400;color:#1f2937;transform:scaleX(0.9527);">Dashboard</span>
<svg style="position:absolute;left:244.3px;top:437.8px;" width="14.62" height="13.00" viewBox="0 0 576 512"><path d="M304 240V16.6c0-9 7-16.6 16-16.6C443.7 0 544 100.3 544 224c0 9-7.6 16-16.6 16H304zM32 272C32 150.7 122.1 50.3 239 34.3c9.2-1.3 17 6.1 17 15.4V288L412.5 444.5c6.7 6.7 6.2 17.7-1.5 23.1C371.8 495.6 323.8 512 272 512C139.5 512 32 404.6 32 272zm526.4 16c9.3 0 16.6 7.8 15.4 17c-7.7 55.9-34.6 105.6-73.9 142.3c-6 5.6-15.4 5.2-21.2-.7L320 288H558.4z" fill="#6b7280"/></svg>
<div style="position:absolute;left:987px;top:436.0px;width:35.5px;height:19px;background:#2563eb;border-radius:9.5px;"></div>
<div style="position:absolute;left:1004.8px;top:437.5px;width:16px;height:16px;background:#fff;border-radius:50%;"></div>
<span class="t" id="t34" style="left:270.60px;top:468.43px;font-size:13px;line-height:13px;font-weight:400;color:#1f2937;transform:scaleX(0.9261);">Clientes</span>
<svg style="position:absolute;left:244.3px;top:466.475px;" width="16.25" height="13.00" viewBox="0 0 640 512"><path d="M144 0a80 80 0 1 1 0 160A80 80 0 1 1 144 0zM512 0a80 80 0 1 1 0 160A80 80 0 1 1 512 0zM0 298.7C0 239.8 47.8 192 106.7 192h42.7c15.9 0 31 3.5 44.6 9.7c-1.3 7.2-1.9 14.7-1.9 22.3c0 38.2 16.8 72.5 43.3 96c-.2 0-.4 0-.7 0H21.3C9.6 320 0 310.4 0 298.7zM405.3 320c-.2 0-.4 0-.7 0c26.6-23.5 43.3-57.8 43.3-96c0-7.6-.7-15-1.900-22.3c13.6-6.3 28.7-9.7 44.6-9.7h42.7C592.2 192 640 239.8 640 298.7c0 11.8-9.6 21.3-21.3 21.3H405.3zM224 224a96 96 0 1 1 192 0 96 96 0 1 1 -192 0zM128 485.3C128 411.7 187.7 352 261.3 352H378.7C452.3 352 512 411.7 512 485.3c0 14.7-11.9 26.7-26.7 26.7H154.7c-14.7 0-26.7-11.9-26.7-26.7z" fill="#6b7280"/></svg>
<div style="position:absolute;left:987px;top:464.8px;width:35.5px;height:19px;background:#2563eb;border-radius:9.5px;"></div>
<div style="position:absolute;left:1004.8px;top:466.3px;width:16px;height:16px;background:#fff;border-radius:50%;"></div>
<span class="t" id="t35" style="left:270.60px;top:497.10px;font-size:13px;line-height:13px;font-weight:400;color:#1f2937;transform:scaleX(0.9376);">Chat/Conversas</span>
<svg style="position:absolute;left:244.3px;top:495.15000000000003px;" width="16.25" height="13.00" viewBox="0 0 640 512"><path d="M208 352c114.9 0 208-78.8 208-176S322.9 0 208 0S0 78.8 0 176c0 38.6 14.7 74.3 39.6 103.4c-3.5 9.4-8.7 17.7-14.2 24.7c-4.8 6.2-9.7 11-13.3 14.3c-1.8 1.6-3.3 2.9-4.3 3.7c-.5 .4-.9 .7-1.1 .8l-.2 .2 0 0 0 0C1 327.2-1.4 334.4 .8 340.9S9.1 352 16 352c21.8 0 43.8-5.6 62.1-12.5c9.2-3.5 17.8-7.4 25.300-11.4C134.1 343.3 169.8 352 208 352zM448 176c0 112.3-99.1 196.9-216.5 207C255.8 457.4 336.4 512 432 512c38.2 0 73.9-8.7 104.7-23.9c7.5 4 16 7.9 25.2 11.4c18.3 6.9 40.3 12.5 62.1 12.5c6.9 0 13.1-4.5 15.2-11.1c2.1-6.6-.2-13.8-5.8-17.9l0 0 0 0-.2-.2c-.2-.2-.6-.4-1.1-.8c-1-.8-2.5-2-4.300-3.7c-3.6-3.3-8.5-8.1-13.3-14.3c-5.5-7-10.7-15.4-14.2-24.7c24.9-29 39.6-64.7 39.6-103.4c0-92.8-84.9-168.9-192.6-175.5c.4 5.1 .6 10.3 .6 15.5z" fill="#6b7280"/></svg>
<div style="position:absolute;left:987px;top:493.6px;width:35.5px;height:19px;background:#2563eb;border-radius:9.5px;"></div>
<div style="position:absolute;left:1004.8px;top:495.1px;width:16px;height:16px;background:#fff;border-radius:50%;"></div>
<span class="t" id="t36" style="left:270.60px;top:525.78px;font-size:13px;line-height:13px;font-weight:400;color:#1f2937;transform:scaleX(0.9620);">Produtos &amp; Serviços</span>
<svg style="position:absolute;left:244.3px;top:523.825px;" width="14.62" height="13.00" viewBox="0 0 576 512"><path d="M248 0H208c-26.5 0-48 21.5-48 48V160c0 35.3 28.7 64 64 64H352c35.3 0 64-28.7 64-64V48c0-26.5-21.5-48-48-48H328V80c0 8.8-7.2 16-16 16H264c-8.8 0-16-7.2-16-16V0zM64 256c-35.3 0-64 28.7-64 64V448c0 35.3 28.7 64 64 64H224c35.3 0 64-28.7 64-64V320c0-35.3-28.7-64-64-64H184v80c0 8.8-7.2 16-16 16H120c-8.8 0-16-7.2-16-16V256H64zM352 512H512c35.3 0 64-28.7 64-64V320c0-35.3-28.7-64-64-64H472v80c0 8.8-7.2 16-16 16H408c-8.8 0-16-7.2-16-16V256H352c-15 0-28.8 5.1-39.7 13.8c4.9 10.4 7.7 22 7.7 34.2V464c0 12.2-2.8 23.8-7.7 34.2C323.2 506.9 337 512 352 512z" fill="#6b7280"/></svg>
<div style="position:absolute;left:987px;top:522.4px;width:35.5px;height:19px;background:#2563eb;border-radius:9.5px;"></div>
<div style="position:absolute;left:1004.8px;top:523.9px;width:16px;height:16px;background:#fff;border-radius:50%;"></div>
<span class="t" id="t37" style="left:270.60px;top:554.45px;font-size:13px;line-height:13px;font-weight:400;color:#1f2937;transform:scaleX(0.9308);">Estoque</span>
<svg style="position:absolute;left:244.3px;top:552.5px;" width="16.25" height="13.00" viewBox="0 0 640 512"><path d="M0 488V171.3c0-26.2 15.9-49.7 40.2-59.4L308.1 4.8c7.6-3.1 16.1-3.1 23.8 0L599.8 111.9c24.3 9.7 40.2 33.3 40.2 59.4V488c0 13.3-10.7 24-24 24H568c-13.3 0-24-10.7-24-24V224c0-17.7-14.3-32-32-32H128c-17.7 0-32 14.3-32 32V488c0 13.3-10.7 24-24 24H24c-13.3 0-24-10.7-24-24zm488 24l-336 0c-13.3 0-24-10.7-24-24V432H512v56c0 13.3-10.7 24-24 24zM128 400V336H512v64H128zm0-96V224H512v80H128z" fill="#6b7280"/></svg>
<div style="position:absolute;left:987px;top:551.2px;width:35.5px;height:19px;background:#2563eb;border-radius:9.5px;"></div>
<div style="position:absolute;left:1004.8px;top:552.7px;width:16px;height:16px;background:#fff;border-radius:50%;"></div>
<span class="t" id="t38" style="left:270.60px;top:583.12px;font-size:13px;line-height:13px;font-weight:400;color:#1f2937;transform:scaleX(0.9153);">Vendas</span>
<svg style="position:absolute;left:244.3px;top:581.175px;" width="14.62" height="13.00" viewBox="0 0 576 512"><path d="M0 24C0 10.7 10.7 0 24 0H69.5c22 0 41.5 12.8 50.6 32h411c26.3 0 45.5 25 38.6 50.4l-41 152.3c-8.5 31.4-37 53.3-69.5 53.3H170.7l5.4 28.5c2.2 11.3 12.1 19.5 23.6 19.5H488c13.3 0 24 10.7 24 24s-10.7 24-24 24H199.7c-34.6 0-64.3-24.6-70.7-58.5L77.4 54.5c-.7-3.8-4-6.5-7.9-6.5H24C10.7 48 0 37.3 0 24zM128 464a48 48 0 1 1 96 0 48 48 0 1 1 -96 0zm336-48a48 48 0 1 1 0 96 48 48 0 1 1 0-96z" fill="#6b7280"/></svg>
<div style="position:absolute;left:987px;top:580.0px;width:35.5px;height:19px;background:#2563eb;border-radius:9.5px;"></div>
<div style="position:absolute;left:1004.8px;top:581.5px;width:16px;height:16px;background:#fff;border-radius:50%;"></div>
<span class="t" id="t39" style="left:270.60px;top:611.80px;font-size:13px;line-height:13px;font-weight:400;color:#1f2937;transform:scaleX(0.9380);">Relatórios</span>
<svg style="position:absolute;left:244.3px;top:609.85px;" width="13.00" height="13.00" viewBox="0 0 512 512"><path d="M32 32c17.7 0 32 14.3 32 32V400c0 8.8 7.2 16 16 16H480c17.7 0 32 14.3 32 32s-14.3 32-32 32H80c-44.2 0-80-35.8-80-80V64C0 46.3 14.3 32 32 32zm96 96c0-17.7 14.3-32 32-32l192 0c17.7 0 32 14.3 32 32s-14.3 32-32 32l-192 0c-17.7 0-32-14.3-32-32zm32 64H280c17.7 0 32 14.3 32 32s-14.3 32-32 32H160c-17.7 0-32-14.3-32-32s14.3-32 32-32zm0 96H416c17.7 0 32 14.3 32 32s-14.3 32-32 32H160c-17.7 0-32-14.3-32-32s14.3-32 32-32z" fill="#6b7280"/></svg>
<div style="position:absolute;left:987px;top:608.8px;width:35.5px;height:19px;background:#2563eb;border-radius:9.5px;"></div>
<div style="position:absolute;left:1004.8px;top:610.3px;width:16px;height:16px;background:#fff;border-radius:50%;"></div>
<span class="t" id="t40" style="left:270.60px;top:640.48px;font-size:13px;line-height:13px;font-weight:400;color:#1f2937;transform:scaleX(0.9390);">Financeiro</span>
<svg style="position:absolute;left:244.3px;top:638.525px;" width="8.12" height="13.00" viewBox="0 0 320 512"><path d="M160 0c17.7 0 32 14.3 32 32V67.7c1.6 .2 3.1 .4 4.7 .7c.4 .1 .7 .1 1.1 .2l48 8.8c17.4 3.2 28.9 19.9 25.7 37.2s-19.9 28.9-37.2 25.7l-47.5-8.7c-31.3-4.6-58.9-1.5-78.3 6.2s-27.2 18.3-29 28.1c-2 10.7-.5 16.7 1.2 20.4c1.8 3.9 5.5 8.3 12.8 13.2c16.3 10.7 41.3 17.7 73.7 26.3l2.9 .8c28.6 7.6 63.6 16.8 89.6 33.8c14.2 9.3 27.6 21.9 35.9 39.5c8.5 17.9 10.3 37.9 6.4 59.2c-6.9 38-33.1 63.4-65.6 76.7c-13.7 5.6-28.6 9.2-44.4 11V480c0 17.7-14.3 32-32 32s-32-14.3-32-32V445.1c-.4-.1-.9-.1-1.3-.2l-.2 0 0 0c-24.4-3.8-64.5-14.3-91.5-26.3c-16.1-7.2-23.4-26.1-16.2-42.2s26.1-23.4 42.2-16.2c20.9 9.3 55.3 18.5 75.2 21.6c31.9 4.7 58.2 2 76-5.3c16.9-6.9 24.6-16.9 26.8-28.9c1.9-10.6 .4-16.7-1.3-20.4c-1.9-4-5.6-8.4-13-13.3c-16.4-10.7-41.5-17.7-74-26.3l-2.8-.7 0 0C119.4 279.3 84.4 270 58.4 253c-14.2-9.3-27.5-22-35.8-39.6c-8.4-17.9-10.1-37.9-6.1-59.2C23.7 116 52.3 91.2 84.8 78.3c13.3-5.3 27.9-8.9 43.2-11V32c0-17.7 14.3-32 32-32z" fill="#6b7280"/></svg>
<div style="position:absolute;left:987px;top:637.6px;width:35.5px;height:19px;background:#2563eb;border-radius:9.5px;"></div>
<div style="position:absolute;left:1004.8px;top:639.1px;width:16px;height:16px;background:#fff;border-radius:50%;"></div>
<span class="t" id="t41" style="left:270.60px;top:669.15px;font-size:13px;line-height:13px;font-weight:400;color:#1f2937;transform:scaleX(0.9273);">Taxa de Entrega</span>
<svg style="position:absolute;left:244.3px;top:667.2px;" width="14.62" height="13.00" viewBox="0 0 576 512"><path d="M408 120c0 54.6-73.1 151.9-105.2 192c-7.7 9.6-22 9.6-29.6 0C241.1 271.9 168 174.6 168 120C168 53.7 221.7 0 288 0s120 53.7 120 120zm8 80.4c3.5-6.9 6.7-13.8 9.6-20.6c.5-1.2 1-2.5 1.5-3.7l116-46.4C558.9 123.4 576 135 576 152V422.8c0 9.8-6 18.6-15.1 22.3L416 503V200.4zM137.6 138.3c2.4 14.1 7.2 28.3 12.8 41.5c2.9 6.8 6.1 13.7 9.6 20.6V451.8L32.9 502.7C17.1 509 0 497.4 0 480.4V209.6c0-9.8 6-18.6 15.1-22.3l122.6-49zM327.8 332c13.9-17.4 35.7-45.7 56.2-77V504.3L192 449.4V255c20.5 31.3 42.3 59.6 56.2 77c20.5 25.6 59.1 25.6 79.6 0zM288 152a40 40 0 1 0 0-80 40 40 0 1 0 0 80z" fill="#6b7280"/></svg>
<div style="position:absolute;left:987px;top:666.4px;width:35.5px;height:19px;background:#2563eb;border-radius:9.5px;"></div>
<div style="position:absolute;left:1004.8px;top:667.9px;width:16px;height:16px;background:#fff;border-radius:50%;"></div>
<div style="position:absolute;left:1068.5px;top:335px;width:817.5px;height:369.5px;background:#fff;border:1px solid #e5e7eb;border-radius:0 0 6px 6px;box-shadow:0 1px 3px rgba(0,0,0,0.07),0 1px 2px rgba(0,0,0,0.04);"></div>
<div style="position:absolute;left:1069.5px;top:336px;width:815.5px;height:80.5px;background:#f0fdf4;border-bottom:1px solid #e5e7eb;"></div>
<svg style="position:absolute;left:1088.1px;top:358.9px;" width="13.60" height="13.60" viewBox="0 0 512 512"><path d="M64 0C46.3 0 32 14.3 32 32V96c0 17.7 14.3 32 32 32h80v32H87c-31.6 0-58.5 23.1-63.3 54.4L1.1 364.1C.4 368.8 0 373.6 0 378.4V448c0 35.3 28.7 64 64 64H448c35.3 0 64-28.7 64-64V378.4c0-4.8-.4-9.6-1.1-14.4L488.2 214.4C483.5 183.1 456.6 160 425 160H208V128h80c17.7 0 32-14.3 32-32V32c0-17.7-14.3-32-32-32H64zM96 48H256c8.8 0 16 7.2 16 16s-7.2 16-16 16H96c-8.8 0-16-7.2-16-16s7.2-16 16-16zM64 432c0-8.8 7.2-16 16-16H432c8.8 0 16 7.2 16 16s-7.2 16-16 16H80c-8.8 0-16-7.2-16-16zm48-168a24 24 0 1 1 0-48 24 24 0 1 1 0 48zm120-24a24 24 0 1 1 -48 0 24 24 0 1 1 48 0zM160 344a24 24 0 1 1 0-48 24 24 0 1 1 0 48zM328 240a24 24 0 1 1 -48 0 24 24 0 1 1 48 0zM256 344a24 24 0 1 1 0-48 24 24 0 1 1 0 48zM424 240a24 24 0 1 1 -48 0 24 24 0 1 1 48 0zM352 344a24 24 0 1 1 0-48 24 24 0 1 1 0 48z" fill="#16a34a"/></svg>
<span class="t" id="t42" style="left:1111.50px;top:359.88px;font-size:14.5px;line-height:14.5px;font-weight:700;color:#14532d;transform:scaleX(0.9234);">Permissões do Vendedor</span>
<span class="t" id="t43" style="left:1087.90px;top:382.23px;font-size:11.5px;line-height:11.5px;font-weight:400;color:#15803d;transform:scaleX(0.9656);">Configurar acessos para funcionários com perfil de vendedor</span>
<span class="t" id="t44" style="left:1114.10px;top:439.75px;font-size:13px;line-height:13px;font-weight:400;color:#1f2937;transform:scaleX(0.9527);">Dashboard</span>
<svg style="position:absolute;left:1087.8px;top:437.8px;" width="14.62" height="13.00" viewBox="0 0 576 512"><path d="M304 240V16.6c0-9 7-16.6 16-16.6C443.7 0 544 100.3 544 224c0 9-7.6 16-16.6 16H304zM32 272C32 150.7 122.1 50.3 239 34.3c9.2-1.3 17 6.1 17 15.4V288L412.5 444.5c6.7 6.7 6.2 17.7-1.5 23.1C371.8 495.6 323.8 512 272 512C139.5 512 32 404.6 32 272zm526.4 16c9.3 0 16.6 7.8 15.4 17c-7.7 55.9-34.6 105.6-73.9 142.3c-6 5.6-15.4 5.2-21.2-.7L320 288H558.4z" fill="#6b7280"/></svg>
<div style="position:absolute;left:1830.2px;top:436.0px;width:35.5px;height:19px;background:#e5e7eb;border-radius:9.5px;"></div>
<div style="position:absolute;left:1831.9px;top:437.5px;width:16px;height:16px;background:#fff;border:1px solid #d1d5db;border-radius:50%;"></div>
<span class="t" id="t45" style="left:1114.10px;top:468.43px;font-size:13px;line-height:13px;font-weight:400;color:#1f2937;transform:scaleX(0.9261);">Clientes</span>
<svg style="position:absolute;left:1087.8px;top:466.475px;" width="16.25" height="13.00" viewBox="0 0 640 512"><path d="M144 0a80 80 0 1 1 0 160A80 80 0 1 1 144 0zM512 0a80 80 0 1 1 0 160A80 80 0 1 1 512 0zM0 298.7C0 239.8 47.8 192 106.7 192h42.7c15.9 0 31 3.5 44.6 9.7c-1.3 7.2-1.9 14.7-1.9 22.3c0 38.2 16.8 72.5 43.3 96c-.2 0-.4 0-.7 0H21.3C9.6 320 0 310.4 0 298.7zM405.3 320c-.2 0-.4 0-.7 0c26.6-23.5 43.3-57.8 43.3-96c0-7.6-.7-15-1.900-22.3c13.6-6.3 28.7-9.7 44.6-9.7h42.7C592.2 192 640 239.8 640 298.7c0 11.8-9.6 21.3-21.3 21.3H405.3zM224 224a96 96 0 1 1 192 0 96 96 0 1 1 -192 0zM128 485.3C128 411.7 187.7 352 261.3 352H378.7C452.3 352 512 411.7 512 485.3c0 14.7-11.9 26.7-26.7 26.7H154.7c-14.7 0-26.7-11.9-26.7-26.7z" fill="#6b7280"/></svg>
<div style="position:absolute;left:1830.2px;top:464.8px;width:35.5px;height:19px;background:#16a34a;border-radius:9.5px;opacity:0.5;"></div>
<div style="position:absolute;left:1848.0px;top:466.3px;width:16px;height:16px;background:#fff;border-radius:50%;"></div>
<span class="t" id="t46" style="left:1114.10px;top:497.10px;font-size:13px;line-height:13px;font-weight:400;color:#1f2937;transform:scaleX(0.9376);">Chat/Conversas</span>
<svg style="position:absolute;left:1087.8px;top:495.15000000000003px;" width="16.25" height="13.00" viewBox="0 0 640 512"><path d="M208 352c114.9 0 208-78.8 208-176S322.9 0 208 0S0 78.8 0 176c0 38.6 14.7 74.3 39.6 103.4c-3.5 9.4-8.7 17.7-14.2 24.7c-4.8 6.2-9.7 11-13.3 14.3c-1.8 1.6-3.3 2.9-4.3 3.7c-.5 .4-.9 .7-1.1 .8l-.2 .2 0 0 0 0C1 327.2-1.4 334.4 .8 340.9S9.1 352 16 352c21.8 0 43.8-5.6 62.1-12.5c9.2-3.5 17.8-7.4 25.300-11.4C134.1 343.3 169.8 352 208 352zM448 176c0 112.3-99.1 196.9-216.5 207C255.8 457.4 336.4 512 432 512c38.2 0 73.9-8.7 104.7-23.9c7.5 4 16 7.9 25.2 11.4c18.3 6.9 40.3 12.5 62.1 12.5c6.9 0 13.1-4.5 15.2-11.1c2.1-6.6-.2-13.8-5.8-17.9l0 0 0 0-.2-.2c-.2-.2-.6-.4-1.1-.8c-1-.8-2.5-2-4.300-3.7c-3.6-3.3-8.5-8.1-13.3-14.3c-5.5-7-10.7-15.4-14.2-24.7c24.9-29 39.6-64.7 39.6-103.4c0-92.8-84.9-168.9-192.6-175.5c.4 5.1 .6 10.3 .6 15.5z" fill="#6b7280"/></svg>
<div style="position:absolute;left:1830.2px;top:493.6px;width:35.5px;height:19px;background:#16a34a;border-radius:9.5px;"></div>
<div style="position:absolute;left:1848.0px;top:495.1px;width:16px;height:16px;background:#fff;border-radius:50%;"></div>
<span class="t" id="t47" style="left:1114.10px;top:525.78px;font-size:13px;line-height:13px;font-weight:400;color:#1f2937;transform:scaleX(0.9620);">Produtos &amp; Serviços</span>
<svg style="position:absolute;left:1087.8px;top:523.825px;" width="14.62" height="13.00" viewBox="0 0 576 512"><path d="M248 0H208c-26.5 0-48 21.5-48 48V160c0 35.3 28.7 64 64 64H352c35.3 0 64-28.7 64-64V48c0-26.5-21.5-48-48-48H328V80c0 8.8-7.2 16-16 16H264c-8.8 0-16-7.2-16-16V0zM64 256c-35.3 0-64 28.7-64 64V448c0 35.3 28.7 64 64 64H224c35.3 0 64-28.7 64-64V320c0-35.3-28.7-64-64-64H184v80c0 8.8-7.2 16-16 16H120c-8.8 0-16-7.2-16-16V256H64zM352 512H512c35.3 0 64-28.7 64-64V320c0-35.3-28.7-64-64-64H472v80c0 8.8-7.2 16-16 16H408c-8.8 0-16-7.2-16-16V256H352c-15 0-28.8 5.1-39.7 13.8c4.9 10.4 7.7 22 7.7 34.2V464c0 12.2-2.8 23.8-7.7 34.2C323.2 506.9 337 512 352 512z" fill="#6b7280"/></svg>
<div style="position:absolute;left:1830.2px;top:522.4px;width:35.5px;height:19px;background:#16a34a;border-radius:9.5px;"></div>
<div style="position:absolute;left:1848.0px;top:523.9px;width:16px;height:16px;background:#fff;border-radius:50%;"></div>
<span class="t" id="t48" style="left:1114.10px;top:554.45px;font-size:13px;line-height:13px;font-weight:400;color:#1f2937;transform:scaleX(0.9308);">Estoque</span>
<svg style="position:absolute;left:1087.8px;top:552.5px;" width="16.25" height="13.00" viewBox="0 0 640 512"><path d="M0 488V171.3c0-26.2 15.9-49.7 40.2-59.4L308.1 4.8c7.6-3.1 16.1-3.1 23.8 0L599.8 111.9c24.3 9.7 40.2 33.3 40.2 59.4V488c0 13.3-10.7 24-24 24H568c-13.3 0-24-10.7-24-24V224c0-17.7-14.3-32-32-32H128c-17.7 0-32 14.3-32 32V488c0 13.3-10.7 24-24 24H24c-13.3 0-24-10.7-24-24zm488 24l-336 0c-13.3 0-24-10.7-24-24V432H512v56c0 13.3-10.7 24-24 24zM128 400V336H512v64H128zm0-96V224H512v80H128z" fill="#6b7280"/></svg>
<div style="position:absolute;left:1830.2px;top:551.2px;width:35.5px;height:19px;background:#e5e7eb;border-radius:9.5px;"></div>
<div style="position:absolute;left:1831.9px;top:552.7px;width:16px;height:16px;background:#fff;border:1px solid #d1d5db;border-radius:50%;"></div>
<span class="t" id="t49" style="left:1114.10px;top:583.12px;font-size:13px;line-height:13px;font-weight:400;color:#1f2937;transform:scaleX(0.9153);">Vendas</span>
<svg style="position:absolute;left:1087.8px;top:581.175px;" width="14.62" height="13.00" viewBox="0 0 576 512"><path d="M0 24C0 10.7 10.7 0 24 0H69.5c22 0 41.5 12.8 50.6 32h411c26.3 0 45.5 25 38.6 50.4l-41 152.3c-8.5 31.4-37 53.3-69.5 53.3H170.7l5.4 28.5c2.2 11.3 12.1 19.5 23.6 19.5H488c13.3 0 24 10.7 24 24s-10.7 24-24 24H199.7c-34.6 0-64.3-24.6-70.7-58.5L77.4 54.5c-.7-3.8-4-6.5-7.9-6.5H24C10.7 48 0 37.3 0 24zM128 464a48 48 0 1 1 96 0 48 48 0 1 1 -96 0zm336-48a48 48 0 1 1 0 96 48 48 0 1 1 0-96z" fill="#6b7280"/></svg>
<div style="position:absolute;left:1830.2px;top:580.0px;width:35.5px;height:19px;background:#e5e7eb;border-radius:9.5px;"></div>
<div style="position:absolute;left:1831.9px;top:581.5px;width:16px;height:16px;background:#fff;border:1px solid #d1d5db;border-radius:50%;"></div>
<span class="t" id="t50" style="left:1114.10px;top:611.80px;font-size:13px;line-height:13px;font-weight:400;color:#1f2937;transform:scaleX(0.9380);">Relatórios</span>
<svg style="position:absolute;left:1087.8px;top:609.85px;" width="13.00" height="13.00" viewBox="0 0 512 512"><path d="M32 32c17.7 0 32 14.3 32 32V400c0 8.8 7.2 16 16 16H480c17.7 0 32 14.3 32 32s-14.3 32-32 32H80c-44.2 0-80-35.8-80-80V64C0 46.3 14.3 32 32 32zm96 96c0-17.7 14.3-32 32-32l192 0c17.7 0 32 14.3 32 32s-14.3 32-32 32l-192 0c-17.7 0-32-14.3-32-32zm32 64H280c17.7 0 32 14.3 32 32s-14.3 32-32 32H160c-17.7 0-32-14.3-32-32s14.3-32 32-32zm0 96H416c17.7 0 32 14.3 32 32s-14.3 32-32 32H160c-17.7 0-32-14.3-32-32s14.3-32 32-32z" fill="#6b7280"/></svg>
<div style="position:absolute;left:1830.2px;top:608.8px;width:35.5px;height:19px;background:#e5e7eb;border-radius:9.5px;"></div>
<div style="position:absolute;left:1831.9px;top:610.3px;width:16px;height:16px;background:#fff;border:1px solid #d1d5db;border-radius:50%;"></div>
<span class="t" id="t51" style="left:1114.10px;top:640.48px;font-size:13px;line-height:13px;font-weight:400;color:#1f2937;transform:scaleX(0.9390);">Financeiro</span>
<svg style="position:absolute;left:1087.8px;top:638.525px;" width="8.12" height="13.00" viewBox="0 0 320 512"><path d="M160 0c17.7 0 32 14.3 32 32V67.7c1.6 .2 3.1 .4 4.7 .7c.4 .1 .7 .1 1.1 .2l48 8.8c17.4 3.2 28.9 19.9 25.7 37.2s-19.9 28.9-37.2 25.7l-47.5-8.7c-31.3-4.6-58.9-1.5-78.3 6.2s-27.2 18.3-29 28.1c-2 10.7-.5 16.7 1.2 20.4c1.8 3.9 5.5 8.3 12.8 13.2c16.3 10.7 41.3 17.7 73.7 26.3l2.9 .8c28.6 7.6 63.6 16.8 89.6 33.8c14.2 9.3 27.6 21.9 35.9 39.5c8.5 17.9 10.3 37.9 6.4 59.2c-6.9 38-33.1 63.4-65.6 76.7c-13.7 5.6-28.6 9.2-44.4 11V480c0 17.7-14.3 32-32 32s-32-14.3-32-32V445.1c-.4-.1-.9-.1-1.3-.2l-.2 0 0 0c-24.4-3.8-64.5-14.3-91.5-26.3c-16.1-7.2-23.4-26.1-16.2-42.2s26.1-23.4 42.2-16.2c20.9 9.3 55.3 18.5 75.2 21.6c31.9 4.7 58.2 2 76-5.3c16.9-6.9 24.6-16.9 26.8-28.9c1.9-10.6 .4-16.7-1.3-20.4c-1.9-4-5.6-8.4-13-13.3c-16.4-10.7-41.5-17.7-74-26.3l-2.8-.7 0 0C119.4 279.3 84.4 270 58.4 253c-14.2-9.3-27.5-22-35.8-39.6c-8.4-17.9-10.1-37.9-6.1-59.2C23.7 116 52.3 91.2 84.8 78.3c13.3-5.3 27.9-8.9 43.2-11V32c0-17.7 14.3-32 32-32z" fill="#6b7280"/></svg>
<div style="position:absolute;left:1830.2px;top:637.6px;width:35.5px;height:19px;background:#e5e7eb;border-radius:9.5px;"></div>
<div style="position:absolute;left:1831.9px;top:639.1px;width:16px;height:16px;background:#fff;border:1px solid #d1d5db;border-radius:50%;"></div>
<span class="t" id="t52" style="left:1114.10px;top:669.15px;font-size:13px;line-height:13px;font-weight:400;color:#1f2937;transform:scaleX(0.9273);">Taxa de Entrega</span>
<svg style="position:absolute;left:1087.8px;top:667.2px;" width="14.62" height="13.00" viewBox="0 0 576 512"><path d="M408 120c0 54.6-73.1 151.9-105.2 192c-7.7 9.6-22 9.6-29.6 0C241.1 271.9 168 174.6 168 120C168 53.7 221.7 0 288 0s120 53.7 120 120zm8 80.4c3.5-6.9 6.7-13.8 9.6-20.6c.5-1.2 1-2.5 1.5-3.7l116-46.4C558.9 123.4 576 135 576 152V422.8c0 9.8-6 18.6-15.1 22.3L416 503V200.4zM137.6 138.3c2.4 14.1 7.2 28.3 12.8 41.5c2.9 6.8 6.1 13.7 9.6 20.6V451.8L32.9 502.7C17.1 509 0 497.4 0 480.4V209.6c0-9.8 6-18.6 15.1-22.3l122.6-49zM327.8 332c13.9-17.4 35.7-45.7 56.2-77V504.3L192 449.4V255c20.5 31.3 42.3 59.6 56.2 77c20.5 25.6 59.1 25.6 79.6 0zM288 152a40 40 0 1 0 0-80 40 40 0 1 0 0 80z" fill="#6b7280"/></svg>
<div style="position:absolute;left:1830.2px;top:666.4px;width:35.5px;height:19px;background:#16a34a;border-radius:9.5px;"></div>
<div style="position:absolute;left:1848.0px;top:667.9px;width:16px;height:16px;background:#fff;border-radius:50%;"></div>
<div style="position:absolute;left:1164.5px;top:465.5px;width:61px;height:18.5px;background:#fef9c3;border-radius:9.25px;"></div>
<span class="t" id="t53" style="left:1171.00px;top:470.30px;font-size:10px;line-height:10px;font-weight:400;color:#854d0e;transform:scaleX(0.9905);">Obrigatório</span>
<div style="position:absolute;left:224px;top:731.3px;width:1662px;height:77.5px;background:#fff;border:1px solid #e8e9ec;border-radius:6px;box-shadow:0 1px 3px rgba(0,0,0,0.07),0 1px 2px rgba(0,0,0,0.04);"></div>
<span class="t" id="t54" style="left:244.60px;top:755.57px;font-size:14.5px;line-height:14.5px;font-weight:700;color:#111827;transform:scaleX(0.8729);">Ações</span>
<span class="t" id="t55" style="left:244.60px;top:775.73px;font-size:11.5px;line-height:11.5px;font-weight:400;color:#4b5563;transform:scaleX(0.9529);">Salvar configurações ou resetar para o padrão</span>
<div style="position:absolute;left:1538.5px;top:753.5px;width:143px;height:33px;background:#fff;border:1px solid #d1d5db;border-radius:6px;"></div>
<svg style="position:absolute;left:1558.1px;top:764.8px;" width="12.80" height="12.80" viewBox="0 0 512 512"><path d="M48.5 224H40c-13.3 0-24-10.7-24-24V72c0-9.7 5.8-18.5 14.8-22.2s19.3-1.7 26.2 5.2L98.6 96.6c87.6-86.5 228.7-86.2 315.8 1c87.5 87.5 87.5 229.3 0 316.8s-229.3 87.5-316.8 0c-12.5-12.5-12.5-32.8 0-45.3s32.8-12.5 45.3 0c62.5 62.5 163.8 62.5 226.3 0s62.5-163.8 0-226.3c-62.2-62.2-162.7-62.5-225.3-1L185 183c6.9 6.9 8.9 17.2 5.2 26.2s-12.5 14.8-22.2 14.8H48.5z" fill="#374151"/></svg>
<span class="t" id="t56" style="left:1578.60px;top:765.67px;font-size:12.5px;line-height:12.5px;font-weight:400;color:#374151;transform:scaleX(0.9479);">Resetar Padrão</span>
<div style="position:absolute;left:1692px;top:753px;width:174px;height:34px;background:#9333ea;border-radius:6px;"></div>
<svg style="position:absolute;left:1710.3px;top:762.5px;" width="12.08" height="13.80" viewBox="0 0 448 512"><path d="M64 32C28.7 32 0 60.7 0 96V416c0 35.3 28.7 64 64 64H384c35.3 0 64-28.7 64-64V173.3c0-17-6.7-33.3-18.7-45.3L352 50.7C340 38.7 323.7 32 306.7 32H64zm0 96c0-17.7 14.3-32 32-32H288c17.7 0 32 14.3 32 32v64c0 17.7-14.3 32-32 32H96c-17.7 0-32-14.3-32-32V128zM224 288a64 64 0 1 1 0 128 64 64 0 1 1 0-128z" fill="#fff"/></svg>
<span class="t" id="t57" style="left:1728.60px;top:765.67px;font-size:12.5px;line-height:12.5px;font-weight:400;color:#ffffff;transform:scaleX(0.9823);">Salvar Configurações</span>
<div style="position:absolute;left:224px;top:835.6px;width:1662px;height:90px;background:#eff6ff;border:1px solid #dbe4f3;border-radius:6px;"></div>
<svg style="position:absolute;left:244.3px;top:857.8px;" width="12.80" height="12.80" viewBox="0 0 512 512"><path d="M256 512A256 256 0 1 0 256 0a256 256 0 1 0 0 512zM216 336h24V272H216c-13.3 0-24-10.7-24-24s10.7-24 24-24h48c13.3 0 24 10.7 24 24v88h8c13.3 0 24 10.7 24 24s-10.7 24-24 24H216c-13.3 0-24-10.7-24-24s10.7-24 24-24zm40-208a32 32 0 1 1 0 64 32 32 0 1 1 0-64z" fill="#2563eb"/></svg>
<span class="t" id="t58" style="left:266.80px;top:857.50px;font-size:14px;line-height:14px;font-weight:700;color:#1e3a8a;transform:scaleX(0.8465);">Como as alterações são aplicadas</span>
<span class="t" id="t59" style="left:267.40px;top:877.12px;font-size:11.5px;line-height:11.5px;font-weight:400;color:#1e40af;transform:scaleX(0.9670);">• As configurações se aplicam imediatamente a todos os funcionários do mesmo nível</span>
<span class="t" id="t60" style="left:267.40px;top:893.12px;font-size:11.5px;line-height:11.5px;font-weight:400;color:#1e40af;transform:scaleX(0.8993);">• Os funcionários precisam fazer login novamente para ver as mudanças</span>
</body></html>
